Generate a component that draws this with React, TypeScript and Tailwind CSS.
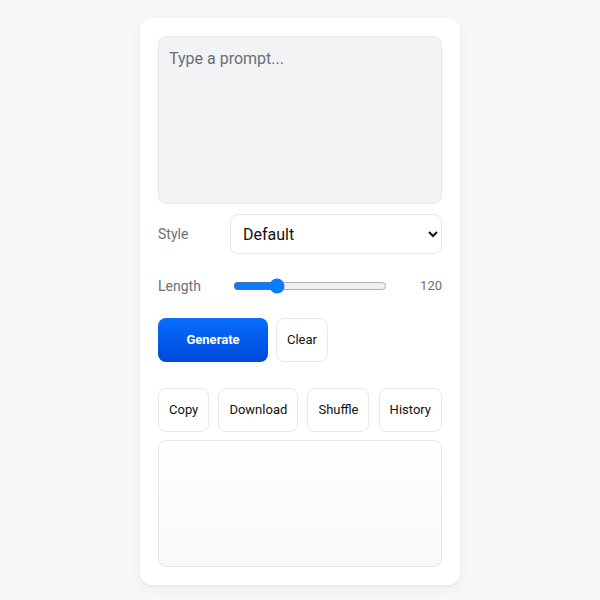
import { useState } from 'react';

export default function App() {
  const [prompt, setPrompt] = useState('');
  const [style, setStyle] = useState('Default');
  const [length, setLength] = useState(120);
  const [output, setOutput] = useState('');

  const gerar = () => {
    setOutput(prompt ? `${prompt} (${style}, ${length})` : '');
  };

  return (
    <div className="min-h-screen bg-[#f7f7f6] pt-[18px] font-['Roboto',sans-serif]">
      <div className="mx-auto w-[320px] rounded-xl bg-white p-[18px] shadow-[0_1px_3px_rgba(0,0,0,0.06),0_4px_14px_rgba(0,0,0,0.04)]">
        <textarea
          value={prompt}
          onChange={(e) => setPrompt(e.target.value)}
          placeholder="Type a prompt..."
          className="block h-[168px] w-full resize-none rounded-lg border border-[#e6e8eb] bg-[#f2f3f5] px-[10px] py-[10px] text-base text-gray-800 placeholder:text-[#6b6f76] outline-none"
        />

        <div className="mt-[10px] flex items-center">
          <label className="w-[72px] text-sm text-[#6b6f76]">Style</label>
          <select
            value={style}
            onChange={(e) => setStyle(e.target.value)}
            className="h-10 flex-1 rounded-lg border border-[#e6e8eb] bg-white px-2 text-base text-[#111]"
          >
            <option>Default</option>
            <option>Formal</option>
            <option>Casual</option>
          </select>
        </div>

        <div className="mt-5 flex h-6 items-center">
          <label className="w-[72px] text-sm text-[#6b6f76]">Length</label>
          <input
            type="range"
            min={20}
            max={400}
            value={length}
            onChange={(e) => setLength(Number(e.target.value))}
            className="ml-[3px] flex-1 accent-[#0b7bff]"
          />
          <span className="ml-[11px] w-[44px] text-right text-[13px] text-[#6b6f76]">{length}</span>
        </div>

        <div className="mt-5 flex gap-2">
          <button
            onClick={gerar}
            className="h-11 w-[110px] rounded-lg bg-gradient-to-b from-[#0a6dff] to-[#0049d9] text-[13px] font-bold text-white"
          >
            Generate
          </button>
          <button
            onClick={() => {
              setPrompt('');
              setOutput('');
            }}
            className="h-11 rounded-lg border border-[#e6e8eb] bg-white px-[10px] text-[13px] text-[#111]"
          >
            Clear
          </button>
        </div>

        <div className="mt-[26px] flex justify-between">
          {['Copy', 'Download', 'Shuffle', 'History'].map((b) => (
            <button key={b} className="h-11 rounded-lg border border-[#e6e8eb] bg-white px-[10px] text-[13px] text-[#111]">
              {b}
            </button>
          ))}
        </div>

        <div className="mt-2 h-[127px] rounded-lg border border-[#e6e8eb] bg-gradient-to-b from-white to-[#f6f8fa] p-3 text-sm text-gray-700">
          {output}
        </div>
      </div>
      <p className="mt-[11px] text-center text-sm text-[#6b6f76]">Local demo · nothing leaves this device</p>
    </div>
  );
}
